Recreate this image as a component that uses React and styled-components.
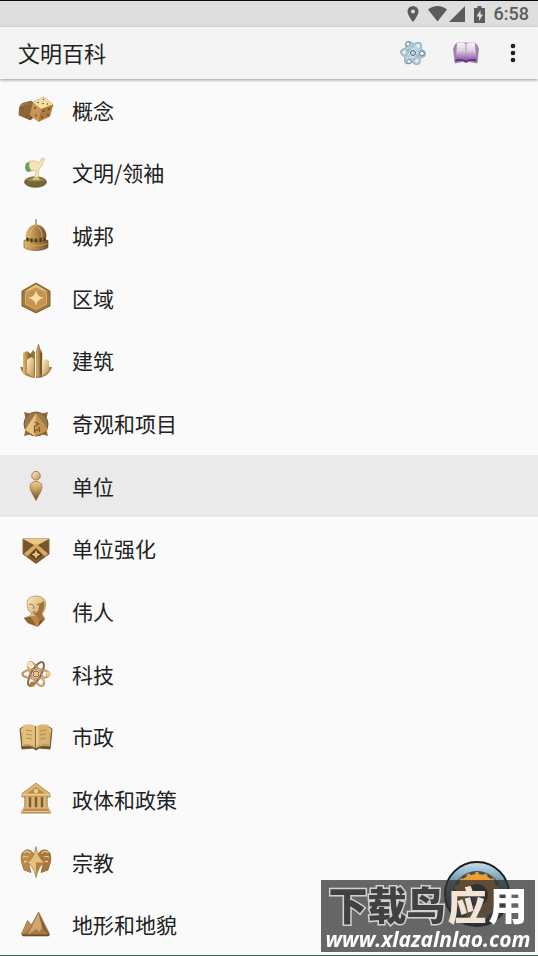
import React from 'react'
import styled, { createGlobalStyle } from 'styled-components'

const GlobalStyle = createGlobalStyle`
  * {
    box-sizing: border-box;
  }
  body {
    margin: 0;
    background: #fafafa;
    color: #212121;
    font-family: 'Noto Sans CJK SC', sans-serif;
  }
  button {
    border: none;
    background: none;
    padding: 0;
    font: inherit;
    color: inherit;
    cursor: pointer;
  }
`
const Page = styled.div`
  display: flex;
  flex-direction: column;
  min-height: 100vh;
  border-top: 1px solid #0b0710;
`
const StatusBar = styled.div`
  display: flex;
  align-items: center;
  justify-content: flex-end;
  gap: 9px;
  height: 26px;
  padding-right: 9px;
  background: #dedede;
  color: #5c5c5c;
`
const Time = styled.time`
  font-family: Roboto, sans-serif;
  font-size: 18px;
  line-height: 26px;
  font-weight: 500;
`
const AppBar = styled.header`
  position: relative;
  display: flex;
  align-items: center;
  height: 52px;
  padding: 0 13px 0 18px;
  background: #f4f4f4;
  box-shadow: 0 1px 3px rgba(0, 0, 0, 0.4);
`
const Title = styled.h1`
  flex: 1;
  margin: 0;
  padding-bottom: 2px;
  font-size: 22px;
  line-height: 32px;
  font-weight: 400;
`
const Actions = styled.div`
  display: flex;
  gap: 17px;
`
const ActionButton = styled.button`
  display: flex;
  align-items: center;
  justify-content: center;
  width: ${(props) => (props.$narrow ? '24px' : '36px')};
  height: 36px;
`
const List = styled.ul`
  flex: 1;
  display: flex;
  flex-direction: column;
  margin: 0;
  padding: 0;
  list-style: none;
`
const Item = styled.li`
  flex: 1;
  display: flex;
  min-height: 48px;
`
const ItemButton = styled.button`
  flex: 1;
  display: flex;
  align-items: center;
  gap: 18px;
  padding: 0 18px;
  font-size: 21px;
  line-height: 32px;
  text-align: left;
  background: ${(props) => (props.$active ? '#eaeaea' : 'transparent')};
`
const ItemName = styled.span`
  padding-bottom: 1px;
`
const Fab = styled.button`
  position: fixed;
  right: 28px;
  bottom: 29px;
  width: 66px;
  height: 66px;
  border-radius: 50%;
`
const NavLine = styled.div`
  position: fixed;
  left: 0;
  right: 0;
  bottom: 0;
  height: 1px;
  background: #2f6a5a;
`
const Watermark = styled.div`
  position: fixed;
  right: 3px;
  bottom: 4px;
  display: flex;
  flex-direction: column;
  align-items: center;
  justify-content: space-between;
  width: 214px;
  height: 72px;
  padding-bottom: 1px;
  background: rgba(52, 52, 52, 0.75);
  color: #fff;
  white-space: nowrap;
`
const MarkName = styled.div`
  display: flex;
  gap: 2px;
  font-family: 'Noto Sans CJK SC', sans-serif;
  font-size: 39px;
  line-height: 46px;
  font-weight: 900;
`
const Outlined = styled.span`
  color: #414141;
  -webkit-text-stroke: 3px #d2d2d2;
  paint-order: stroke fill;
`
const Solid = styled.span`
  color: ${(props) => (props.$soft ? '#f0e5d8' : '#fff')};
`
const MarkSite = styled.div`
  font-family: 'Open Sans', sans-serif;
  font-size: 21px;
  line-height: 24px;
  font-weight: 700;
  font-style: italic;
`
const Defs = styled.svg`
  position: absolute;
  width: 0;
  height: 0;
`

const Gradients = () => (
  <Defs aria-hidden="true">
    <defs>
      <linearGradient id="gold" x1="0" y1="0" x2="0" y2="1">
        <stop offset="0" stopColor="#f0cd8a" />
        <stop offset="0.45" stopColor="#c2965a" />
        <stop offset="1" stopColor="#65431f" />
      </linearGradient>
      <linearGradient id="light" x1="0" y1="0" x2="1" y2="1">
        <stop offset="0" stopColor="#fff0c4" />
        <stop offset="1" stopColor="#c08f50" />
      </linearGradient>
      <linearGradient id="dark" x1="0" y1="0" x2="1" y2="1">
        <stop offset="0" stopColor="#b38a4d" />
        <stop offset="1" stopColor="#65421d" />
      </linearGradient>
      <linearGradient id="side" x1="0" y1="0" x2="1" y2="0">
        <stop offset="0" stopColor="#dfba78" />
        <stop offset="0.4" stopColor="#bd9150" />
        <stop offset="1" stopColor="#75522a" />
      </linearGradient>
      <linearGradient id="purple" x1="0" y1="0" x2="0" y2="1">
        <stop offset="0" stopColor="#f7f3f6" />
        <stop offset="0.5" stopColor="#dccfdf" />
        <stop offset="1" stopColor="#8747a6" />
      </linearGradient>
      <linearGradient id="rim" x1="0" y1="0" x2="0" y2="1">
        <stop offset="0" stopColor="#c9e2ee" />
        <stop offset="0.3" stopColor="#6f95aa" />
        <stop offset="1" stopColor="#232c34" />
      </linearGradient>
      <linearGradient id="gear" x1="0" y1="0" x2="0" y2="1">
        <stop offset="0" stopColor="#f3a53a" />
        <stop offset="0.5" stopColor="#d18427" />
        <stop offset="1" stopColor="#c09a62" />
      </linearGradient>
    </defs>
  </Defs>
)

const Icon = styled.svg.attrs({ viewBox: '0 0 36 36', 'aria-hidden': true })`
  flex: none;
  width: 36px;
  height: 36px;
`

const DiceIcon = () => (
  <Icon>
    <path d="M1.500 15 4 11.500l9-2.500 5.500 3.500-2 11.500-4 4L1 23z" fill="url(#dark)" stroke="#684823" strokeWidth="0.6" />
    <path d="m1.500 15 7-2.500 10 0L13 17 12 27 1 23z" fill="#8b6736" />
    <path d="M15 10.500 25.500 5 35 12.500 31.500 24.500 20.500 29.500 12 23z" fill="#e0b674" stroke="#9b7038" strokeWidth="0.6" />
    <path d="M15 10.500 25.500 5 35 12.500 23 17z" fill="#f6dfa6" />
    <path d="M15 10.500 23 17 20.500 29.500 12 23z" fill="#c79654" />
    <path d="M23 17 35 12.500 31.500 24.500 20.500 29.500z" fill="#a87a40" />
    <g fill="#823a22">
      <circle cx="20" cy="10.500" r="0.800" /><circle cx="25" cy="11.500" r="0.800" /><circle cx="29.500" cy="12" r="0.800" />
      <circle cx="25.500" cy="7.500" r="0.700" /><circle cx="17" cy="16" r="0.900" /><circle cx="18" cy="23.500" r="0.900" />
      <circle cx="25.500" cy="19" r="0.900" /><circle cx="31" cy="17" r="0.900" />
      <circle cx="24" cy="25" r="0.900" /><circle cx="30" cy="23" r="0.900" /><circle cx="5" cy="17" r="0.800" />
      <circle cx="9" cy="24" r="0.800" />
    </g>
  </Icon>
)
const LeaderIcon = () => (
  <Icon>
    <ellipse cx="17.500" cy="27" rx="11" ry="5.300" fill="#756733" stroke="#5d5122" strokeWidth="0.7" />
    <path d="M8 25q9-5 19 0-9 3-19 0" fill="#9b8c49" />
    <path d="M8 8 14 6 15 16 9 17 7 13z" fill="#67a055" />
    <path d="M11.500 6 18 6 21 8 24 3 26.500 4 23.500 11 21 14 20 23 16.500 23 18 16 13 15.500 11 11z" fill="#f4e4b8" stroke="#cdb77f" strokeWidth="0.7" />
    <path d="M16 22h4l2 3h-8z" fill="#d3c184" />
  </Icon>
)
const CityIcon = () => (
  <Icon>
    <path d="M17.400 1h1.200V9h-1.200z" fill="#88745b" />
    <path d="M8 17h20v8q-10 4-20 0z" fill="#9b7339" />
    <path d="M6 22.500l3-1q9 4 18 0l3 1v7c-5 4-19 4-24 0z" fill="url(#side)" stroke="#6b4822" strokeWidth="0.6" />
    <path d="M7.500 19C7.500 11 13 7 18 6.500 24 7 28.500 11 28.500 19q-10.500 4-21 0" fill="url(#side)" />
    <path d="M18 7q-6 4-6 12M18 7q6 4 6 12" fill="none" stroke="#e3bf80" strokeWidth="0.7" />
    <path d="M9.500 20v3.500m4-3v4m4.500-4v4m4.500-4.500v4m4-4.500v3.500" stroke="#4c3519" strokeWidth="1.800" />
    <path d="M6.500 25.500q11.500 5 23 0" stroke="#d7ac64" fill="none" strokeWidth="0.8" />
  </Icon>
)
const DistrictIcon = () => (
  <Icon>
    <path d="M18 3 32 11v15L18 33 4 26V11z" fill="#a2773c" stroke="#88602f" />
    <path d="M18 4.500 30.500 12 18 9 5.500 12z" fill="#e9c482" />
    <path d="M18 7 28.500 13v11L18 29.500 7.500 24V13z" fill="#c49452" stroke="#d9b06d" />
    <path d="M18 10c1 5 3 7 8 8-5 1-7 3-8 8-1-5-3-7-8-8 5-1 7-3 8-8" fill="#f9dda6" />
  </Icon>
)
const BuildingIcon = () => (
  <Icon>
    <path d="M2 24h32c-2 7-8 11-16 11S4 31 2 24" fill="#a98045" />
    <path d="M5 10 9 8l4 3v20H5z" fill="url(#side)" />
    <path d="M13 10l2-3 3 4v20h-5z" fill="#96713d" />
    <path d="M18 9 19 6 20.500 1 22 6l2 4v24h-6z" fill="url(#side)" stroke="#8b6736" strokeWidth="0.5" />
    <path d="M9 17l4-3 3 2v18q-4-1-7-4z" fill="url(#light)" />
    <path d="M24 18l4-2 3 2v10l-7 5z" fill="url(#light)" />
    <path d="M17.500 10v25" stroke="#fff" strokeWidth="1" />
    <path d="M23 10v21" stroke="#75532a" strokeWidth="1.500" />
  </Icon>
)
const WonderIcon = () => (
  <Icon>
    <path d="M6 6l8 2h8l8-2-2 8v8l2 8-8-2h-8l-8 2 2-8v-8z" fill="#896b3e" />
    <circle cx="18" cy="18" r="12" fill="#9a7847" stroke="#785a32" />
    <path d="M18 7.500 30 24 17 30 7 24z" fill="#cda161" />
    <path d="M18 7.500 30 24 17 30z" fill="#c0934f" />
    <path d="M18 7.500 7 24l10 6z" fill="#e6c181" />
    <path d="m16.500 16 4 2-4 2v7m5-6v2l-5 2m5 1v-5" stroke="#7a5729" fill="none" strokeWidth="1.200" />
  </Icon>
)
const UnitIcon = () => (
  <Icon>
    <circle cx="18" cy="7.700" r="4.300" fill="url(#light)" stroke="#a87d46" />
    <path d="M18 13.500c3.800 0 6 2.200 6 5C24 23 20 28 18 32.500 16 28 12 23 12 18.500c0-2.800 2.200-5 6-5" fill="url(#gold)" stroke="#8c673d" strokeWidth="0.7" />
    <path d="M15 18q1-2.500 3-2.500v9z" fill="#e4bf7e" opacity="0.500" />
  </Icon>
)
const PromotionIcon = () => (
  <Icon>
    <path d="M5 8h26v15L18 32.500 5 23z" fill="#76552a" stroke="#8e6b3a" />
    <path d="M5 8h26L18 15z" fill="#edc883" />
    <path d="m6 22.500 12-10 12 10-3 3-9-8-9 8z" fill="#d3aa65" />
    <path d="m18 17 7 7-7 6-7-6z" fill="#5d3f1b" stroke="#a87e42" strokeWidth="0.7" />
    <path d="m18 19 1.500 3 3 1.500-3 1.500-1.500 3-1.500-3-3-1.500 3-1.500z" fill="#e5bd75" />
  </Icon>
)
const PersonIcon = () => (
  <Icon>
    <path d="M9 10C9 5 13 3 19 3c6 .5 9.500 4 8.500 10-.5 4-2 6-3.500 8l3 5-7 7.500L10 30 6 25l6-2 1.500-2.500L10 17z" fill="url(#light)" stroke="#b58a4c" strokeWidth="0.7" />
    <path d="M26 8c1 5-.5 9-2.500 13l3 5-5 2-3-5-4-3q5 1 6-4l1-5z" fill="#a1733b" />
    <path d="M11.500 11.500q2.500-.500 3.500.5m4-.5 3.500-.5m-6.500 1.500-.5 3.500m-1 3h3" stroke="#8b602d" fill="none" strokeWidth="0.9" />
    <path d="m6 25 6.500-1.500L19 33.500 10 30z" fill="#8d6230" />
    <path d="m12.500 23.500 6-1 3 5.500-2 5.500z" fill="#b98848" />
    <path d="m21.500 28 5-2-6.500 7.500z" fill="#6f4a21" />
  </Icon>
)
const ScienceIcon = () => (
  <Icon>
    <g fill="none" strokeWidth="2">
      <ellipse cx="18" cy="18" rx="13.500" ry="4.800" stroke="#a47b50" />
      <ellipse cx="18" cy="18" rx="13.500" ry="4.800" stroke="#b48a55" transform="rotate(60 18 18)" />
      <ellipse cx="18" cy="18" rx="13.500" ry="4.800" stroke="#8e6745" transform="rotate(120 18 18)" />
      <g stroke="#f1d6a1" strokeWidth="0.500">
        <ellipse cx="18" cy="18" rx="13.500" ry="4.800" />
        <ellipse cx="18" cy="18" rx="13.500" ry="4.800" transform="rotate(60 18 18)" />
      </g>
    </g>
    <circle cx="18" cy="18" r="3" fill="#e9c78c" stroke="#8d6235" />
    <circle cx="12" cy="8.500" r="2.800" fill="#f7e5b7" />
    <circle cx="30" cy="18" r="2.600" fill="#efc983" />
    <circle cx="14.500" cy="28" r="2.600" fill="#b27d3b" />
  </Icon>
)
const CivicIcon = () => (
  <Icon>
    <path d="M2 10l3-2h26l3 2-2 20-11-1-3 2-3-2-11 1z" fill="url(#gold)" stroke="#72502b" />
    <path d="M5 6.500q7-2.500 12.500.5l.5 21Q12 24 4 26z" fill="#e3c080" />
    <path d="M31 6.500q-7-2.500-12.500.5L18 28q6-4 14-2z" fill="#d9b370" />
    <path d="M17.500 7v21" stroke="#8b6432" />
    <path d="M19 7v20" stroke="#fbe8bb" />
    <path d="m8 11 6 1m-6 3 6 1m-6 3 6 1m14-9-6 1m6 3-6 1m6 3-6 1" stroke="#b0864b" strokeWidth="0.9" />
    <path d="M4 26.500q8-2 14 2 6-4 14-2" fill="none" stroke="#f3d597" strokeWidth="0.8" />
  </Icon>
)
const GovernmentIcon = () => (
  <Icon>
    <path d="m18 2 14 10.500V16H4v-3.500z" fill="#dcb472" stroke="#a27a42" strokeWidth="0.7" />
    <path d="m18 6 9 6.500H9z" fill="#b58a4c" />
    <circle cx="18" cy="10" r="2.200" fill="#edcc8e" />
    <path d="M6.500 16h23v12h-23z" fill="#7f5b2f" />
    <path d="M9 16v12M15 16v12M21 16v12M27 16v12" stroke="#dcb370" strokeWidth="3.500" />
    <path d="M5 26.500h26V29l2 1v2.500H3V30l2-1z" fill="#b98b4e" />
    <path d="M5 27h26M3 30.500h30M4 13.500h28" stroke="#f0d093" strokeWidth="0.9" />
  </Icon>
)
const ReligionIcon = () => (
  <Icon>
    <path d="M16 10Q10 2 4 9q-1.500 5-.5 9L6 26l7 2.500L11 21l5-3z" fill="#b98b4b" stroke="#8a6432" strokeWidth="0.7" />
    <path d="M20 10q6-8 12-1 1.500 5 .5 9L30 26l-7 2.500L25 21l-5-3z" fill="#a5773b" stroke="#855d2f" strokeWidth="0.7" />
    <path d="M5.500 9q4-3.500 7 .5M5 13.500q3-2.500 5 0M6 18q1.500-1.500 3 0M30.500 9q-4-3.500-7 .5m7.500 4q-3-2.500-5 0M30 18q-1.500-1.500-3 0" fill="none" stroke="#ecc98b" strokeWidth="1.200" />
    <path d="M18 2.500Q20 14 26.500 18.500 20.500 22 18 33.500 15.500 22 9.500 18.500 16 14 18 2.500" fill="#e6bf7c" stroke="#8f6834" strokeWidth="0.600" />
    <path d="M18 18.500h8.500Q20.500 22 18 33z" fill="#b28043" />
  </Icon>
)
const TerrainIcon = () => (
  <Icon>
    <path d="M3.500 27 9.500 13.500l4 4.500 7-13L31.500 27l-1 2H5z" fill="#a57a46" stroke="#765028" strokeWidth="0.6" />
    <path d="M20.500 5.500 10 28l8-6 3 3 3-4z" fill="#cfa66b" />
    <path d="M20.500 5.500 31 28l-6-6z" fill="#8a6136" />
    <path d="m9.500 14-6 13.500 7-4.500 3-5z" fill="#b88d52" />
    <path d="M4 27.500h28L30.500 29H5z" fill="#6f4b25" />
  </Icon>
)

const TechActionIcon = () => (
  <svg width="28" height="28" viewBox="0 0 28 28" aria-hidden="true">
    <g fill="#cfe3eb" fillOpacity="0.45" stroke="#8aa9b6" strokeWidth="2">
      <ellipse cx="14" cy="14" rx="12" ry="5" transform="rotate(5 14 14)" />
      <ellipse cx="14" cy="14" rx="12" ry="5" transform="rotate(65 14 14)" />
      <ellipse cx="14" cy="14" rx="12" ry="5" transform="rotate(125 14 14)" />
    </g>
    <g fill="none" stroke="#d9eaf0" strokeWidth="0.500">
      <ellipse cx="14" cy="14" rx="12" ry="5" transform="rotate(5 14 14)" />
      <ellipse cx="14" cy="14" rx="12" ry="5" transform="rotate(65 14 14)" />
      <ellipse cx="14" cy="14" rx="12" ry="5" transform="rotate(125 14 14)" />
    </g>
    <circle cx="14" cy="14" r="2.500" fill="#c1e4ef" stroke="#466a7d" />
    <g fill="#e9fbff" stroke="#466c80" strokeWidth="0.8">
      <circle cx="9" cy="5" r="2.300" />
      <circle cx="23" cy="14.500" r="2.300" />
      <circle cx="10" cy="22.500" r="2.300" />
    </g>
  </svg>
)
const BookActionIcon = () => (
  <svg width="26" height="24" viewBox="0 0 26 24" aria-hidden="true">
    <path d="M2 4 4 2h18l2 2 1.500 4-1.500 14-8-1.500-3 1-3-1L2 22 .5 8z" fill="#a183ab" stroke="#8b7391" strokeWidth="0.600" />
    <path d="M4 2q6-1 9 1v16q-4-3-10-1zM22 2q-6-1-9 1v16q4-3 10-1z" fill="url(#purple)" />
    <path d="M13 3v16" stroke="#a38fa9" strokeWidth="0.800" />
    <path d="M7 10v7m3-7v7m6-7v7m3-7v7" stroke="#b79cc2" strokeWidth="0.600" />
    <path d="M2.500 19.500q6.500-1.500 10.500 1 4-2.500 10.500-1" fill="none" stroke="#67258a" strokeWidth="1.800" />
  </svg>
)
const MoreIcon = () => (
  <svg width="6" height="20" viewBox="0 0 6 20" fill="#1f1f1f" aria-hidden="true">
    <circle cx="3" cy="3" r="2.300" />
    <circle cx="3" cy="10" r="2.300" />
    <circle cx="3" cy="17" r="2.300" />
  </svg>
)
const PinIcon = () => (
  <svg width="12" height="16" viewBox="0 0 12 16" aria-hidden="true">
    <path fillRule="evenodd" d="M6 0a5.500 5.500 0 0 1 5.500 5.500C11.500 9.500 6 16 6 16S.5 9.500.5 5.500A5.500 5.500 0 0 1 6 0m0 3.500a2 2 0 1 0 0 4 2 2 0 0 0 0-4" fill="currentColor" />
  </svg>
)
const SignalIcon = () => (
  <svg width="37" height="16" viewBox="0 0 37 16" fill="currentColor" aria-hidden="true">
    <path d="M0 3.500Q4 0 9.500 0T19 3.500L9.500 15.500z" />
    <path d="M37 0v16H21z" />
  </svg>
)
const BatteryIcon = () => (
  <svg width="11" height="17" viewBox="0 0 11 17" aria-hidden="true">
    <path d="M3.500 0h4v2H11v15H0V2h3.500z" fill="currentColor" />
    <path d="M6.500 4 2.500 10.500H5V15l4-6.500H6.500z" fill="#dedede" />
  </svg>
)
const teeth = Array.from({ length: 16 }, (_, i) => i * 22.5)
const FabIcon = () => (
  <svg width="66" height="66" viewBox="0 0 66 66" display="block" aria-hidden="true">
    <circle cx="33" cy="33" r="32" fill="url(#rim)" stroke="#17191d" strokeWidth="2" />
    <circle cx="33" cy="35" r="25" fill="#35505f" />
    {teeth.map((angle) => (
      <rect key={angle} x="31" y="11" width="4" height="6" rx="1" fill="#e0932f" transform={`rotate(${angle} 33 35)`} />
    ))}
    <circle cx="33" cy="35" r="22" fill="url(#gear)" />
    <circle cx="33" cy="34" r="11" fill="#2a2320" />
    <circle cx="33" cy="36" r="6" fill="#5b5a5c" />
  </svg>
)

const categories = [
  { name: '概念', icon: DiceIcon },
  { name: '文明/领袖', icon: LeaderIcon },
  { name: '城邦', icon: CityIcon },
  { name: '区域', icon: DistrictIcon },
  { name: '建筑', icon: BuildingIcon },
  { name: '奇观和项目', icon: WonderIcon },
  { name: '单位', icon: UnitIcon, active: true },
  { name: '单位强化', icon: PromotionIcon },
  { name: '伟人', icon: PersonIcon },
  { name: '科技', icon: ScienceIcon },
  { name: '市政', icon: CivicIcon },
  { name: '政体和政策', icon: GovernmentIcon },
  { name: '宗教', icon: ReligionIcon },
  { name: '地形和地貌', icon: TerrainIcon },
]

const App = () => {
  return (
    <>
      <GlobalStyle />
      <Gradients />
      <Page>
        <StatusBar>
          <PinIcon />
          <SignalIcon />
          <BatteryIcon />
          <Time>6:58</Time>
        </StatusBar>
        <AppBar>
          <Title>文明百科</Title>
          <Actions>
            <ActionButton aria-label="科技"><TechActionIcon /></ActionButton>
            <ActionButton aria-label="市政"><BookActionIcon /></ActionButton>
            <ActionButton aria-label="更多" $narrow><MoreIcon /></ActionButton>
          </Actions>
        </AppBar>
        <List>
          {categories.map(({ name, icon: CategoryIcon, active }) => (
            <Item key={name}>
              <ItemButton $active={active}>
                <CategoryIcon />
                <ItemName>{name}</ItemName>
              </ItemButton>
            </Item>
          ))}
        </List>
      </Page>
      <Fab aria-label="设置"><FabIcon /></Fab>
      <Watermark>
        <MarkName>
          <Outlined>下载鸟</Outlined>
          <Solid $soft>应</Solid>
          <Solid>用</Solid>
        </MarkName>
        <MarkSite>www.xlazalnlao.com</MarkSite>
      </Watermark>
      <NavLine />
    </>
  )
}

export default App
